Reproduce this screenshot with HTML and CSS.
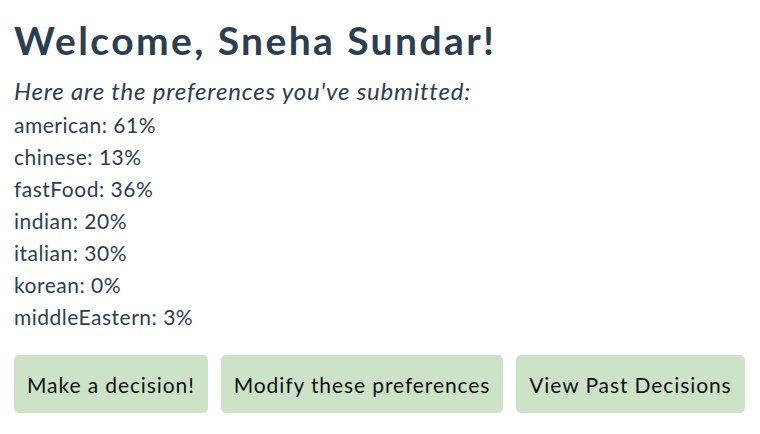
FILE: index.html
```html
<!DOCTYPE html>
<html>
<head>
<meta charset="utf-8">
<link rel="stylesheet" href="styles.css">
</head>
<body>
<div class="page">
  <h1 class="title">Welcome, Sneha Sundar!</h1>
  <p class="intro">Here are the preferences you've submitted:</p>
  <ul class="prefs">
    <li>american: 61%</li>
    <li>chinese: 13%</li>
    <li>fastFood: 36%</li>
    <li>indian: 20%</li>
    <li>italian: 30%</li>
    <li>korean: 0%</li>
    <li>middleEastern: 3%</li>
  </ul>
  <div class="actions">
    <button class="btn">Make a decision!</button>
    <button class="btn">Modify these preferences</button>
    <button class="btn">View Past Decisions</button>
  </div>
</div>
</body>
</html>
```
FILE: styles.css
```css
html, body {
  margin: 0;
  padding: 0;
  background: #ffffff;
}
.page {
  padding: 14px;
  font-family: Lato, "Open Sans", sans-serif;
  color: #2c3e50;
}
.title {
  margin: 3px 0 0 0;
  font-size: 39px;
  line-height: 46px;
  font-weight: 700;
  letter-spacing: 2.4px;
}
.intro {
  margin: 13px 0 0 0;
  font-size: 24px;
  line-height: 30px;
  font-style: italic;
  letter-spacing: 0.8px;
}
.prefs {
  list-style: none;
  margin: 3px 0 0 0;
  padding: 0;
}
.prefs li {
  font-size: 21px;
  line-height: 32px;
  letter-spacing: 0.5px;
}
.actions {
  display: flex;
  gap: 13px;
  margin-top: 22px;
}
.btn {
  height: 58px;
  padding: 0 13px;
  border: none;
  border-radius: 5px;
  background: #cde3c7;
  color: #111111;
  font-family: Lato, "Open Sans", sans-serif;
  font-size: 21px;
  letter-spacing: 0.9px;
}
```
